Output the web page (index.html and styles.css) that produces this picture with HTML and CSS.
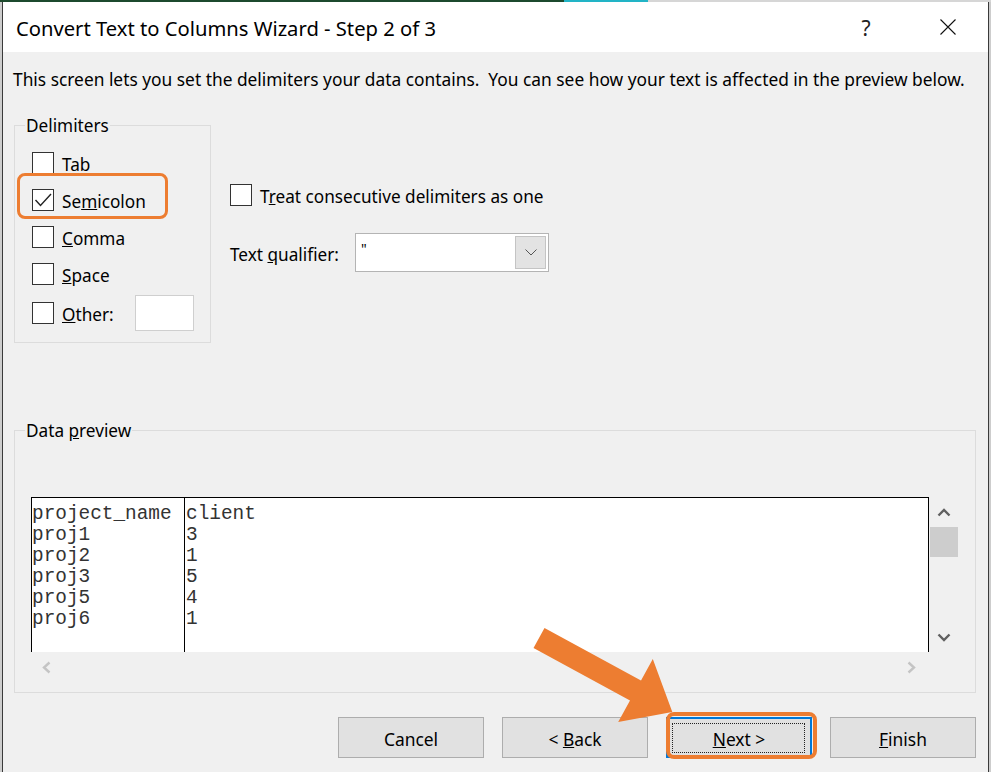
FILE: index.html
```html
<!DOCTYPE html>
<html>
<head>
<meta charset="utf-8">
<title>Convert Text to Columns Wizard - Step 2 of 3</title>
<link rel="stylesheet" href="styles.css">
</head>
<body>
<div class="taskstrip"><span class="seg-green"></span><span class="seg-cyan"></span><span class="seg-gray"></span></div>
<div class="dialog">
  <div class="titlebar">
    <div class="title">Convert Text to Columns Wizard - Step 2 of 3</div>
    <div class="tb-btn help">?</div>
    <div class="tb-btn close">
      <svg width="16" height="16" viewBox="0 0 16 16"><path d="M0.5 0.5 L15.5 15.5 M15.5 0.5 L0.5 15.5" stroke="#111" stroke-width="1.1" fill="none"/></svg>
    </div>
  </div>
  <div class="body">
    <p class="desc">This screen lets you set the delimiters your data contains.&nbsp; You can see how your text is affected in the preview below.</p>
    <div class="options">
      <fieldset class="group delims">
        <legend>Delimiters</legend>
        <div class="check-row"><span class="cb"></span><span class="lbl">Tab</span></div>
        <div class="check-row highlighted"><span class="cb"><svg width="20" height="20" viewBox="0 0 20 20"><path d="M2.5 10 L7.5 15.5 L18 4" stroke="#222" stroke-width="1.4" fill="none"/></svg></span><span class="lbl">Se<u>m</u>icolon</span></div>
        <div class="check-row"><span class="cb"></span><span class="lbl"><u>C</u>omma</span></div>
        <div class="check-row"><span class="cb"></span><span class="lbl"><u>S</u>pace</span></div>
        <div class="check-row other"><span class="cb"></span><span class="lbl"><u>O</u>ther:</span><span class="textbox"></span></div>
      </fieldset>
      <div class="right-opts">
        <div class="check-row single"><span class="cb"></span><span class="lbl">T<u>r</u>eat consecutive delimiters as one</span></div>
        <div class="qual-row">
          <span class="qual-label lbl">Text <u>q</u>ualifier:</span>
          <div class="combo">
            <span class="combo-val">"</span>
            <span class="combo-btn"><svg width="12" height="7" viewBox="0 0 12 7"><path d="M0.5 0.5 L6 6 L11.5 0.5" stroke="#555" stroke-width="1" fill="none"/></svg></span>
          </div>
        </div>
      </div>
    </div>
    <fieldset class="group preview-group">
      <legend>Data <u>p</u>review</legend>
      <div class="preview">
        <div class="sheet">
          <div class="col c1">project_name<br>proj1<br>proj2<br>proj3<br>proj5<br>proj6</div>
          <div class="col c2">client<br>3<br>1<br>5<br>4<br>1</div>
        </div>
        <div class="vscroll">
          <span class="sb-arrow"><svg width="14" height="9" viewBox="0 0 14 9"><path d="M1.5 7.5 L7 2 L12.5 7.5" stroke="#606060" stroke-width="2.4" fill="none"/></svg></span>
          <span class="thumb"></span>
          <span class="sb-fill"></span>
          <span class="sb-arrow"><svg width="14" height="9" viewBox="0 0 14 9"><path d="M1.5 1.5 L7 7 L12.5 1.5" stroke="#606060" stroke-width="2.4" fill="none"/></svg></span>
        </div>
        <div class="hscroll">
          <span class="sb-arrow h"><svg width="9" height="13" viewBox="0 0 9 13"><path d="M7.5 1.5 L2 6.5 L7.5 11.5" stroke="#c4c4c4" stroke-width="2.4" fill="none"/></svg></span>
          <span class="sb-arrow h"><svg width="9" height="13" viewBox="0 0 9 13"><path d="M1.5 1.5 L7 6.5 L1.5 11.5" stroke="#c4c4c4" stroke-width="2.4" fill="none"/></svg></span>
        </div>
        <div class="corner"></div>
      </div>
    </fieldset>
    <div class="buttons">
      <button class="btn">Cancel</button>
      <button class="btn">&lt; <u>B</u>ack</button>
      <button class="btn default"><u>N</u>ext &gt;</button>
      <button class="btn"><u>F</u>inish</button>
    </div>
  </div>
</div>
<svg class="arrow" width="991" height="772" viewBox="0 0 991 772">
  <polygon points="544.5,627.9 641,680.4 652.8,658.9 672.3,712 618.2,722.1 630,700.6 533.5,648.1" fill="#ed7d31"/>
</svg>
</body>
</html>
```

FILE: styles.css
```css
html, body {
  margin: 0;
  padding: 0;
}
body {
  position: relative;
  width: 991px;
  height: 772px;
  overflow: hidden;
  background: #cdcdcd;
  font-family: "Noto Sans", "Open Sans", "DejaVu Sans", sans-serif;
  font-size: 17.2px;
  color: #000;
}
.taskstrip {
  display: flex;
  height: 2px;
}
.seg-green { width: 564px; background: #1c4a2e; }
.seg-cyan { width: 84px; background: #22b4c6; }
.seg-gray { flex: 1; background: #d6d6d6; }

.dialog {
  margin-left: 2px;
  width: 987px;
  height: 770px;
  box-sizing: border-box;
  border-left: 1px solid #3a3a3a;
  border-right: 1px solid #3a3a3a;
  background: #f0f0f0;
}
.titlebar {
  height: 50px;
  background: #fff;
  display: flex;
  align-items: center;
}
.title {
  flex: 1;
  padding-left: 13px;
  font-size: 20.2px;
  line-height: 26px;
  padding-top: 2px;
}
.tb-btn {
  width: 46px;
  height: 50px;
  display: flex;
  align-items: center;
  justify-content: center;
}
.help {
  font-size: 21px;
  color: #222;
  margin-right: 36px;
  padding-top: 1px;
  box-sizing: border-box;
}
.close {
  margin-right: 17px;
}

.body {
  padding: 16px 12px 0 11px;
}
.desc {
  margin: 0 0 0 -1px;
  line-height: 22px;
  font-size: 17.35px;
  white-space: nowrap;
}
.options {
  display: flex;
  margin-top: 23px;
  align-items: flex-start;
}
fieldset.group {
  margin: 0;
  border: 1px solid #dcdcdc;
  min-width: 0;
}
fieldset.group legend {
  padding: 2px 1px 0;
  line-height: 22px;
}
.delims {
  width: 197px;
  box-sizing: border-box;
  padding: 7px 16px 8px 17px;
}
fieldset.delims legend {
  margin-left: -7px;
}
.check-row {
  position: relative;
  display: flex;
  align-items: center;
  gap: 8px;
  height: 37px;
  line-height: 22px;
}
.lbl {
  padding-top: 4px;
}
.check-row.other {
  height: 42px;
}
.check-row.single {
  height: 22px;
}
.cb {
  width: 22px;
  height: 22px;
  box-sizing: border-box;
  border: 1px solid #333;
  background: #fff;
  flex: none;
  display: flex;
}
.cb svg { display: block; }
.textbox {
  margin-left: auto;
  width: 59px;
  height: 36px;
  box-sizing: border-box;
  border: 1px solid #cfcfcf;
  background: #fff;
}
.highlighted::before {
  content: "";
  position: absolute;
  left: -15px;
  top: -8px;
  width: 151px;
  height: 46px;
  box-sizing: border-box;
  border: 3px solid #ed7d31;
  border-radius: 8px;
}
.right-opts {
  margin-left: 19px;
  padding-top: 71px;
}
.qual-row {
  display: flex;
  align-items: center;
  margin-top: 27px;
}
.qual-label {
  width: 125px;
}
.combo {
  width: 194px;
  height: 39px;
  box-sizing: border-box;
  border: 1px solid #b4b4b4;
  background: #fff;
  display: flex;
  padding: 2px;
}
.combo-val {
  flex: 1;
  font-size: 14px;
  line-height: 18px;
  padding: 4px 0 0 3px;
}
.combo-btn {
  width: 31px;
  box-sizing: border-box;
  background: #e3e3e3;
  border: 1px solid #c4c4c4;
  display: flex;
  align-items: center;
  justify-content: center;
}

fieldset.preview-group {
  margin-top: 75px;
  padding: 55px 17px 9px 16px;
}
fieldset.preview-group legend {
  margin-left: -6px;
}
.preview {
  display: grid;
  grid-template-columns: 898px 29px;
  grid-template-rows: 155px 31px;
}
.sheet {
  background: #fff;
  border: 1px solid #000;
  border-bottom: none;
  display: flex;
  font-family: "Liberation Mono", "Courier New", monospace;
  font-size: 19.4px;
  line-height: 21px;
  color: #333;
}
.col {
  padding-top: 6px;
  white-space: nowrap;
}
.c1 {
  width: 152px;
  border-right: 1px solid #000;
}
.c2 {
  padding-left: 1px;
}
.vscroll {
  display: flex;
  flex-direction: column;
  align-items: center;
}
.sb-arrow {
  height: 30px;
  width: 29px;
  display: flex;
  align-items: center;
  justify-content: center;
  flex: none;
}
.thumb {
  width: 28px;
  height: 30px;
  margin-left: 1px;
  background: #cdcdcd;
}
.sb-fill { flex: 1; }
.hscroll {
  display: flex;
  justify-content: space-between;
  align-items: center;
  padding: 0 3px 0 1px;
}
.sb-arrow.h {
  height: 31px;
}

.buttons {
  display: flex;
  justify-content: flex-end;
  gap: 18px;
  margin-top: 24px;
}
.btn {
  position: relative;
  width: 146px;
  height: 41px;
  box-sizing: border-box;
  background: #e1e1e1;
  border: 1px solid #adadad;
  font-family: inherit;
  font-size: 17.4px;
  color: #000;
  padding: 2px 0 0;
  margin: 0;
}
.btn.default {
  border: 2px solid #0078d7;
}
.btn.default::after {
  content: "";
  position: absolute;
  left: 4px;
  top: 4px;
  right: 5px;
  bottom: 3px;
  border: 1px dotted #222;
}
.btn.default::before {
  content: "";
  position: absolute;
  left: -2px;
  top: -7px;
  width: 151px;
  height: 47px;
  box-sizing: border-box;
  border: 4px solid #ed7d31;
  border-radius: 8px;
}
.arrow {
  position: absolute;
  left: 0;
  top: 0;
  pointer-events: none;
}
```
